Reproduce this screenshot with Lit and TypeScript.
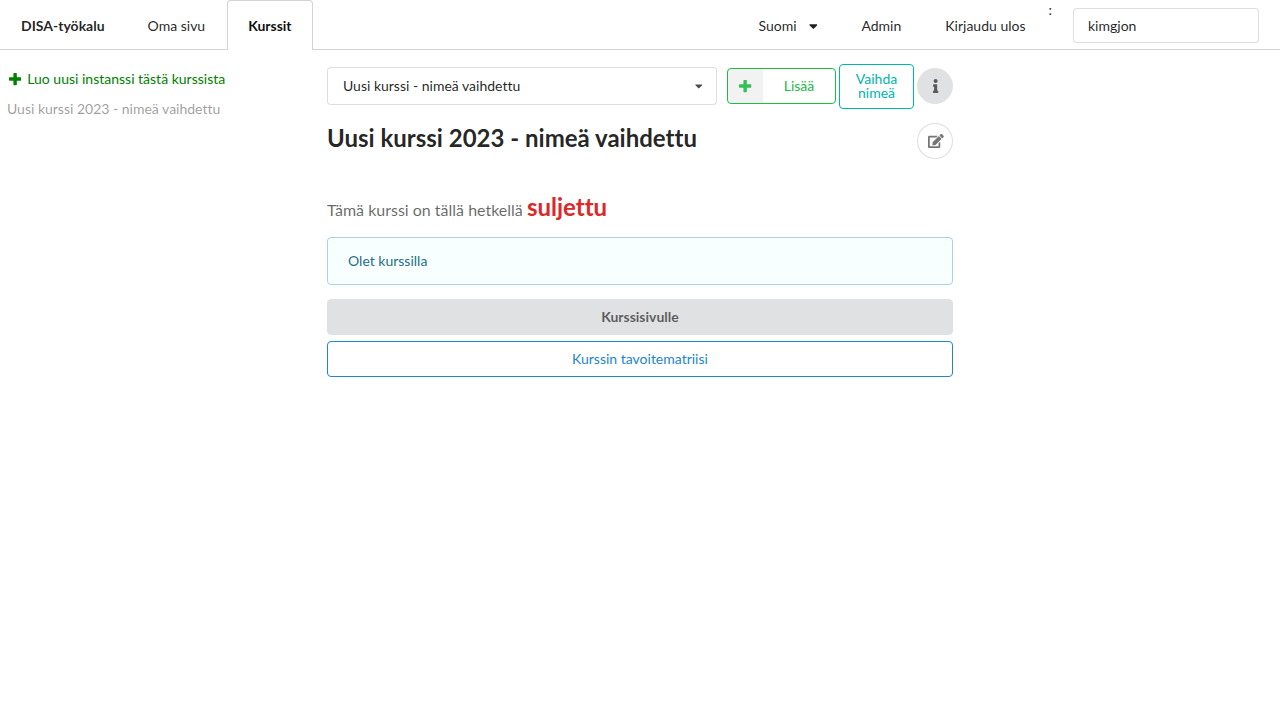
import { LitElement, html, css, svg } from "lit";
import { customElement, state } from "lit/decorators.js";

const ICONS = {
  plus: {
    width: 448,
    path: "M448 294.2v-76.4c0-13.3-10.7-24-24-24H286.2V56c0-13.3-10.7-24-24-24h-76.4c-13.3 0-24 10.7-24 24v137.8H24c-13.3 0-24 10.7-24 24v76.4c0 13.3 10.7 24 24 24h137.8V456c0 13.3 10.7 24 24 24h76.4c13.3 0 24-10.7 24-24V318.2H424c13.3 0 24-10.7 24-24z",
  },
  caret: {
    width: 320,
    path: "M31.3 192h257.3c17.8 0 26.7 21.5 14.1 34.1L174.1 354.8c-7.8 7.8-20.5 7.8-28.3 0L17.2 226.1C4.6 213.5 13.5 192 31.3 192z",
  },
  info: {
    width: 192,
    path: "M20 424.229h20V279.771H20c-11.046 0-20-8.954-20-20V212c0-11.046 8.954-20 20-20h112c11.046 0 20 8.954 20 20v212.229h20c11.046 0 20 8.954 20 20V492c0 11.046-8.954 20-20 20H20c-11.046 0-20-8.954-20-20v-47.771c0-11.046 8.954-20 20-20zM96 0C56.235 0 24 32.235 24 72s32.235 72 72 72 72-32.235 72-72S135.764 0 96 0z",
  },
  edit: {
    width: 576,
    path: "M402.6 83.2l90.2 90.2c3.8 3.8 3.8 10 0 13.8L274.4 405.6l-92.8 10.3c-12.4 1.4-22.9-9.1-21.5-21.5l10.3-92.8L388.8 83.2c3.8-3.8 10-3.8 13.8 0zm162-22.9l-48.8-48.8c-15.2-15.2-39.9-15.2-55.2 0l-35.4 35.4c-3.8 3.8-3.8 10 0 13.8l90.2 90.2c3.8 3.8 10 3.8 13.8 0l35.4-35.4c15.2-15.3 15.2-40 0-55.2zM384 346.2V448H64V128h229.8c3.2 0 6.2-1.3 8.5-3.5l40-40c7.6-7.6 1.9-20.5-8.5-20.5H48C21.5 64 0 85.5 0 112v352c0 26.5 21.5 48 48 48h352c26.5 0 48-21.5 48-48V306.2c0-10.7-12.9-16-20.5-8.5l-40 40c-2.2 2.3-3.5 5.3-3.5 8.5z",
  },
};

const icon = (name: keyof typeof ICONS) => svg`
  <svg class="icon" viewBox="0 0 ${ICONS[name].width} 512" aria-hidden="true">
    <path d=${ICONS[name].path} fill="currentColor" />
  </svg>`;

const base = css`
  *,
  *::before,
  *::after {
    box-sizing: border-box;
  }
  button,
  input,
  select {
    font: inherit;
    margin: 0;
  }
  a {
    color: inherit;
    text-decoration: none;
  }
  .icon {
    display: block;
    flex: none;
    height: 14px;
  }
`;

@customElement("nav-bar")
export class NavBar extends LitElement {
  @state() private uid = "kimgjon";

  static styles = [
    base,
    css`
      :host {
        display: block;
      }
      .bar {
        display: flex;
        align-items: stretch;
        gap: 1px;
        height: 50px;
        border-bottom: 1px solid #d4d4d5;
      }
      .item {
        display: flex;
        align-items: center;
        gap: 12px;
        padding: 2px 21px 0;
        border: 0;
        background: none;
        color: rgba(0, 0, 0, 0.87);
        line-height: 14px;
      }
      .brand {
        font-weight: 700;
      }
      .active {
        margin-bottom: -1px;
        padding: 1px 20px;
        border: 1px solid #d4d4d5;
        border-bottom: 0;
        border-radius: 4px 4px 0 0;
        background: #fff;
        color: rgba(0, 0, 0, 0.95);
        font-weight: 700;
      }
      .right {
        display: flex;
        gap: 2px;
        margin-left: auto;
      }
      .uid {
        display: flex;
        align-items: center;
        gap: 21px;
        padding: 2px 21px 0 0;
      }
      .uid label {
        align-self: flex-start;
        color: rgba(0, 0, 0, 0.87);
        line-height: 16px;
      }
      .uid input {
        width: 186px;
        height: 35px;
        padding: 0 14px;
        border: 1px solid rgba(34, 36, 38, 0.15);
        border-radius: 4px;
        background: #fff;
        color: rgba(0, 0, 0, 0.87);
        outline: 0;
      }
    `,
  ];

  render() {
    return html`
      <nav class="bar">
        <a class="item brand" href="#">DISA-työkalu</a>
        <a class="item" href="#user">Oma sivu</a>
        <a class="item active" href="#courses" aria-current="page">Kurssit</a>
        <div class="right">
          <button class="item" type="button" aria-haspopup="menu">Suomi ${icon("caret")}</button>
          <a class="item" href="#admin">Admin</a>
          <a class="item" href="#logout">Kirjaudu ulos</a>
          <div class="uid">
            <label for="uid">:</label>
            <input
              id="uid"
              type="text"
              .value=${this.uid}
              @input=${(e: Event) => (this.uid = (e.target as HTMLInputElement).value)}
            />
          </div>
        </div>
      </nav>
    `;
  }
}

@customElement("course-page")
export class CoursePage extends LitElement {
  static styles = [
    base,
    css`
      :host {
        display: grid;
        grid-template-columns: 1fr 2fr 1fr;
      }
      .side {
        display: flex;
        flex-direction: column;
        align-items: flex-start;
        gap: 10px;
        padding: 19px 7px;
        line-height: 20px;
      }
      .create {
        display: flex;
        align-items: center;
        gap: 6px;
        padding-left: 2px;
        color: #008000;
      }
      .instance {
        color: rgba(0, 0, 0, 0.4);
      }
      .main {
        min-width: 0;
        padding: 14px 7px;
      }
      .tools {
        display: flex;
        align-items: center;
        gap: 3px;
      }
      .tools > :not(.rename) {
        margin-bottom: 1px;
      }
      .picker {
        display: grid;
        flex: 1;
        align-items: center;
        margin-right: 7px;
        color: rgba(0, 0, 0, 0.87);
      }
      .picker select,
      .picker .arrow {
        grid-area: 1 / 1;
      }
      .picker select {
        width: 100%;
        height: 38px;
        padding: 0 32px 0 15px;
        border: 1px solid rgba(34, 36, 38, 0.15);
        border-radius: 4px;
        appearance: none;
        background: #fff;
        color: inherit;
      }
      .arrow {
        justify-self: end;
        margin-right: 15px;
        opacity: 0.8;
        pointer-events: none;
      }
      .arrow .icon {
        height: 12px;
      }
      .button {
        display: flex;
        align-items: center;
        justify-content: center;
        min-height: 36px;
        padding: 0 15px;
        border: 1px solid currentColor;
        border-radius: 4px;
        background: #fff;
        line-height: 14px;
        text-align: center;
      }
      .add {
        width: 109px;
        padding: 0;
        overflow: hidden;
        color: #21ba45;
      }
      .badge {
        display: flex;
        align-items: center;
        justify-content: center;
        width: 35px;
        height: 34px;
        background: rgba(0, 0, 0, 0.05);
      }
      .badge .icon {
        opacity: 0.9;
      }
      .add-text {
        flex: 1;
      }
      .rename {
        width: 75px;
        min-height: 45px;
        padding-bottom: 1px;
        color: #00b5ad;
      }
      .round {
        width: 36px;
        padding: 0 0 0 2px;
        border-radius: 50%;
        color: rgba(0, 0, 0, 0.54);
      }
      .grey {
        border-color: #e0e1e2;
        background: #e0e1e2;
        color: rgba(0, 0, 0, 0.6);
        font-weight: 700;
      }
      .outline {
        border-color: rgba(34, 36, 38, 0.15);
      }
      .heading {
        display: flex;
        align-items: flex-start;
        justify-content: space-between;
        margin-top: 14px;
      }
      h1 {
        margin: 0;
        font-size: 24px;
        font-weight: 700;
        line-height: 30px;
      }
      .status {
        margin: 32px 0 11px;
        color: rgba(0, 0, 0, 0.6);
        font-size: 16px;
        line-height: 32px;
      }
      .closed {
        color: #db2828;
        font-size: 24px;
        font-weight: 700;
      }
      .message {
        margin-bottom: 14px;
        padding: 13px 20px;
        border: 1px solid #a9d5de;
        border-radius: 4px;
        background: #f8ffff;
        color: #276f86;
        line-height: 20px;
      }
      .actions {
        display: grid;
        gap: 6px;
      }
      .blue {
        border-color: #2185d0;
        color: #2185d0;
      }
    `,
  ];

  render() {
    return html`
      <aside class="side">
        <a class="create" href="#create">${icon("plus")}<span>Luo uusi instanssi tästä kurssista</span></a>
        <a class="instance" href="#instance">Uusi kurssi 2023 - nimeä vaihdettu</a>
      </aside>
      <main class="main">
        <div class="tools">
          <div class="picker">
            <select aria-label="Kurssit">
              <option>Uusi kurssi - nimeä vaihdettu</option>
            </select>
            <span class="arrow">${icon("caret")}</span>
          </div>
          <button class="button add" type="button">
            <span class="badge">${icon("plus")}</span><span class="add-text">Lisää</span>
          </button>
          <button class="button rename" type="button">Vaihda nimeä</button>
          <button class="button round grey" type="button" aria-label="Info">${icon("info")}</button>
        </div>
        <header class="heading">
          <h1>Uusi kurssi 2023 - nimeä vaihdettu</h1>
          <button class="button round outline" type="button" aria-label="Muokkaa">${icon("edit")}</button>
        </header>
        <p class="status">Tämä kurssi on tällä hetkellä <span class="closed">suljettu</span></p>
        <div class="message">Olet kurssilla</div>
        <div class="actions">
          <a class="button grey" href="#course">Kurssisivulle</a>
          <a class="button blue" href="#matrix">Kurssin tavoitematriisi</a>
        </div>
      </main>
    `;
  }
}

@customElement("app-root")
export class AppRoot extends LitElement {
  static styles = css`
    :host {
      display: block;
      min-height: 100vh;
      background: #fff;
      color: rgba(0, 0, 0, 0.87);
      font-family: Lato, "Liberation Sans", Arial, sans-serif;
      font-size: 14px;
      font-variant-ligatures: none;
      line-height: 20px;
    }
  `;

  render() {
    return html`<nav-bar></nav-bar><course-page></course-page>`;
  }
}
